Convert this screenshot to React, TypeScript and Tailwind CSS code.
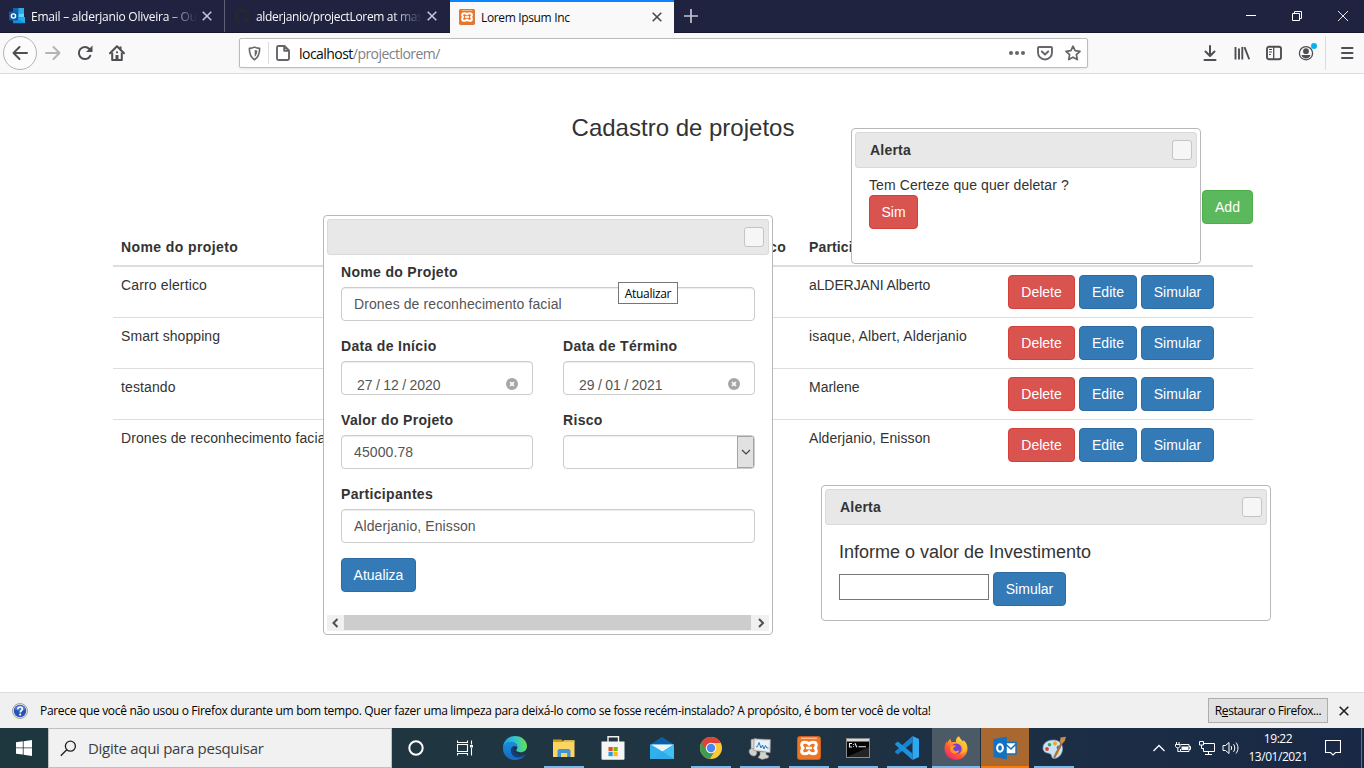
import React from "react";
import { FaGithub } from "react-icons/fa";

const UI = "font-['Open_Sans','Noto_Sans',sans-serif]";

/* ---------- small shared pieces ---------- */

function Xampp({ className }: { className: string }) {
  return (
    <svg className={className} viewBox="0 0 24 24">
      <rect x="0.5" y="0.5" width="23" height="23" rx="2.2" fill="#ee7524" stroke="#c85f22" />
      <rect x="4" y="1.6" width="16" height="1.4" fill="#f9b98a" />
      <path
        d="M8 6.200c-2.300 0-3.300 1.200-3.300 2.800 0 1.200.5 2 1.300 3-.8 1-1.300 1.800-1.300 3 0 1.600 1 2.800 3.300 2.800 1.700 0 3-.6 4-1.700 1 1.100 2.300 1.700 4 1.700 2.300 0 3.300-1.200 3.300-2.800 0-1.200-.5-2-1.300-3 .8-1 1.300-1.800 1.300-3 0-1.600-1-2.800-3.300-2.800-1.700 0-3 .6-4 1.700-1-1.100-2.300-1.700-4-1.700z"
        fill="none" stroke="#fff" strokeWidth="3"
      />
      <path d="M9 12h6" stroke="#fff" strokeWidth="2.600" />
    </svg>
  );
}

function Cross({ className }: { className: string }) {
  return (
    <svg className={className} viewBox="0 0 10 10">
      <path d="M0.700 0.700 9.300 9.300M9.300 0.700 0.700 9.300" fill="none" stroke="currentColor" strokeWidth="1.600" />
    </svg>
  );
}

type Tone = "danger" | "primary" | "success";
const tones: Record<Tone, string> = {
  danger: "bg-[#d9534f] border-[#d43f3a]",
  primary: "bg-[#337ab7] border-[#2e6da4]",
  success: "bg-[#5cb85c] border-[#4cae4c]",
};

function Btn({ tone, width, children }: { tone: Tone; width: string; children: React.ReactNode }) {
  return (
    <button className={`h-[34px] shrink-0 rounded border text-center text-sm leading-5 whitespace-nowrap text-white ${width} ${tones[tone]}`}>
      {children}
    </button>
  );
}

/* ---------- browser chrome ---------- */

function TabBar() {
  return (
    <div className={`flex h-[33px] shrink-0 border-b border-[#15172c] bg-[#202340] text-[12px] ${UI}`}>
      <div className="flex w-[225px] items-center border-r border-[#5d5f75] pr-[12px] pl-[9px] text-[#f9f9fa]">
        <svg className="h-4 w-4 shrink-0" viewBox="0 0 16 16">
          <rect x="4" y="0" width="11" height="11" fill="#1066b5" />
          <rect x="9.500" y="0" width="5.500" height="5.500" fill="#32a9e7" />
          <rect x="9.500" y="5.500" width="5.500" height="4" fill="#50d9ff" />
          <path d="M4 9h12v6.200H4z" fill="#1490df" />
          <path d="M16 9v6.200L7 10z" fill="#28a8ea" />
          <rect x="0" y="3.500" width="9" height="9" rx="0.800" fill="#0f5ba8" />
          <circle cx="4.500" cy="8" r="2.100" fill="none" stroke="#fff" strokeWidth="1.400" />
        </svg>
        <span className="ml-[6px] w-[166px] mask-r-from-82% pt-[2px] whitespace-nowrap tracking-[-0.24px]">Email – alderjanio Oliveira – Ou</span>
        <Cross className="ml-[5px] h-[10px] w-[10px] shrink-0 text-[#c4c5cf]" />
      </div>
      <div className="flex w-[225px] items-center pr-[12px] pl-[9px] text-[#f9f9fa]">
        <FaGithub className="h-4 w-4 shrink-0 text-[#24292e]" />
        <span className="ml-[6px] w-[166px] mask-r-from-82% pt-[2px] whitespace-nowrap tracking-[-0.34px]">alderjanio/projectLorem at mas</span>
        <Cross className="ml-[5px] h-[10px] w-[10px] shrink-0 text-[#c4c5cf]" />
      </div>
      <div className="-mb-px flex h-[33px] w-[224px] items-center border-t-2 border-[#0a84ff] bg-[#f9f9fa] pr-[12px] pb-[1px] pl-[9px] text-[#0c0c0d]">
        <Xampp className="h-4 w-4 shrink-0" />
        <span className="ml-[6px] flex-1 pt-[2px] whitespace-nowrap tracking-[-0.35px]">Lorem Ipsum Inc</span>
        <Cross className="h-[10px] w-[10px] shrink-0 text-[#4a4a4f]" />
      </div>
      <div className="flex flex-1 items-center pl-[10px]">
        <svg className="h-[14px] w-[14px]" viewBox="0 0 14 14">
          <path d="M7 0v14M0 7h14" stroke="#c4c5cf" strokeWidth="1.700" />
        </svg>
        <div className="ml-auto flex items-center gap-[36px] pr-[16px]">
          <svg className="h-[10px] w-[10px]" viewBox="0 0 10 10"><path d="M0 4.500h10" stroke="#fff" /></svg>
          <svg className="h-[10px] w-[10px]" viewBox="0 0 10 10">
            <path d="M0.500 2.500h7v7h-7zM2.500 2.500v-2h7v7h-2" fill="none" stroke="#fff" />
          </svg>
          <svg className="h-[10px] w-[10px]" viewBox="0 0 10 10"><path d="M0 0l10 10M10 0L0 10" stroke="#fff" strokeWidth="0.900" /></svg>
        </div>
      </div>
    </div>
  );
}

function Toolbar() {
  return (
    <div className="flex h-[41px] shrink-0 items-center border-b border-[#dcdcdd] bg-[#f9f9fa] text-[#4f4f53]">
      <div className="ml-[3px] flex h-[34px] w-[34px] items-center justify-center rounded-full border border-[#b3b3b5] bg-[#fcfcfd]">
        <svg className="h-4 w-4" viewBox="0 0 16 16" fill="none" stroke="currentColor" strokeWidth="2" strokeLinecap="round" strokeLinejoin="round">
          <path d="M15 8H1.500M7.500 2 1.500 8l6 6" />
        </svg>
      </div>
      <svg className="ml-[8px] h-4 w-4" viewBox="0 0 16 16" fill="none" stroke="#b4b4b6" strokeWidth="2" strokeLinecap="round" strokeLinejoin="round">
        <path d="M1 8h13.500M8.500 2l6 6-6 6" />
      </svg>
      <svg className="ml-[16px] h-4 w-4" viewBox="0 0 16 16" fill="none" stroke="currentColor" strokeWidth="2">
        <path d="M13.300 10.700A6 6 0 1 1 12.300 4" strokeLinecap="round" />
        <path d="M15.500.5v6.500H9z" fill="currentColor" stroke="none" />
      </svg>
      <svg className="ml-[16px] h-4 w-4" viewBox="0 0 16 16" fill="none" stroke="currentColor" strokeWidth="2" strokeLinejoin="round">
        <path d="M1 8.200 8 1.300l7 6.900" strokeLinecap="round" />
        <path d="M3.200 7.500V15h9.600V7.500M11.500 1.500v3" />
        <path d="M6.500 14v-4h3v4z" fill="currentColor" stroke="none" />
        <circle cx="8" cy="7.300" r="1.100" fill="currentColor" stroke="none" />
      </svg>
      <div className="ml-[114px] flex h-[30px] w-[849px] items-center rounded-[2px] border border-[#bcbcbe] bg-white pr-[6px] pl-[7px] shadow-[0_1px_3px_rgba(0,0,0,0.08)]">
        <svg className="h-[15px] w-[15px]" viewBox="0 0 16 16" fill="none" stroke="#65656a" strokeWidth="1.700">
          <path d="M8 1.200c2 .9 3.800 1.200 5.500 1.300 0 6-1 9.500-5.500 12.200C3.500 12 2.500 8.500 2.500 2.500 4.200 2.400 6 2.100 8 1.200z" strokeLinejoin="round" />
          <path d="M8.200 4.200v7.300c2.100-1.700 2.700-3.500 2.800-6.600z" fill="#65656a" stroke="none" />
        </svg>
        <div className="ml-[6px] h-[22px] w-px bg-[#dcdcde]" />
        <svg className="ml-[6px] h-4 w-4" viewBox="0 0 16 16" fill="none" stroke="#65656a" strokeWidth="1.900" strokeLinejoin="round">
          <path d="M3.500 1h6L14 5.500v8a1.500 1.500 0 0 1-1.500 1.500h-9A1.500 1.500 0 0 1 2 13.500v-11A1.500 1.500 0 0 1 3.500 1zM9.200 1v4.800H14" />
        </svg>
        <span className={`ml-[8px] pt-[1px] text-[14px] tracking-[-0.54px] text-[#0c0c0d] ${UI}`}>
          localhost<span className="text-[#808084]">/projectlorem/</span>
        </span>
        <svg className="ml-auto h-4 w-4" viewBox="0 0 16 16" fill="#65656a">
          <circle cx="2" cy="8" r="2" /><circle cx="8" cy="8" r="2" /><circle cx="14" cy="8" r="2" />
        </svg>
        <svg className="ml-[12px] h-4 w-4" viewBox="0 0 16 16" fill="none" stroke="#65656a" strokeWidth="1.900" strokeLinecap="round" strokeLinejoin="round">
          <path d="M2 2h12a1 1 0 0 1 1 1v4.500a7 7 0 0 1-14 0V3a1 1 0 0 1 1-1zM4.800 6.500 8 9.500l3.200-3" />
        </svg>
        <svg className="ml-[12px] h-4 w-4" viewBox="0 0 16 16" fill="none" stroke="#65656a" strokeWidth="1.700" strokeLinejoin="round">
          <path d="M8 1.200l2.100 4.500 4.900.6-3.600 3.400.9 4.900L8 12.200l-4.300 2.400.9-4.900L1 6.300l4.900-.6z" />
        </svg>
      </div>
      <div className="ml-auto flex items-center">
        <svg className="h-4 w-4" viewBox="0 0 16 16" fill="none" stroke="currentColor" strokeWidth="2" strokeLinecap="round" strokeLinejoin="round">
          <path d="M8 1v9.500M3.500 6.500 8 11l4.500-4.500M2.500 15h11" />
        </svg>
        <svg className="ml-[16px] h-4 w-4" viewBox="0 0 16 16" fill="none" stroke="currentColor" strokeWidth="1.900">
          <path d="M1.500 2v12.500M5 3.500v11M8.300 2v12.500M10.500 2.200l4.700 12" />
        </svg>
        <svg className="ml-[16px] h-4 w-4" viewBox="0 0 16 16" fill="none" stroke="currentColor" strokeWidth="1.900">
          <rect x="1" y="1.800" width="14" height="12.400" rx="2" />
          <path d="M7.700 2v12" strokeWidth="1.300" /><path d="M3 4.500h3M3 7h3M3 9.500h2" strokeWidth="1.100" />
        </svg>
        <div className="relative ml-[16px] h-4 w-4">
          <svg className="h-4 w-4" viewBox="0 0 16 16" fill="none" stroke="currentColor">
            <circle cx="8" cy="8.200" r="6.600" strokeWidth="1.300" />
            <circle cx="8" cy="6.200" r="2.900" fill="currentColor" stroke="none" />
            <path d="M3.500 10h9c-.5 2.300-2.300 3.500-4.500 3.500S4 12.300 3.500 10z" fill="currentColor" stroke="none" />
          </svg>
          <div className="absolute top-[-2px] left-[13px] h-[6px] w-[6px] rounded-full bg-[#00b3f4]" />
        </div>
        <div className="ml-[11px] h-[34px] w-px bg-[#dcdcde]" />
        <svg className="mr-[9px] ml-[13px] h-4 w-4" viewBox="0 0 16 16" stroke="currentColor" strokeWidth="2" strokeLinecap="round">
          <path d="M3 3h10.500M3 8h10.500M3 13h10.500" />
        </svg>
      </div>
    </div>
  );
}

/* ---------- page content ---------- */

const projects = [
  { name: "Carro elertico", people: "aLDERJANI Alberto", nameCls: "tracking-[0.14px]", peopleCls: "tracking-[-0.1px]" },
  { name: "Smart shopping", people: "isaque, Albert, Alderjanio", nameCls: "tracking-[0.07px]", peopleCls: "tracking-[0.15px]" },
  { name: "testando", people: "Marlene", nameCls: "tracking-[0.12px]", peopleCls: "" },
  { name: "Drones de reconhecimento facial", people: "Alderjanio, Enisson", nameCls: "tracking-[0.1px]", peopleCls: "tracking-[0.08px]" },
];

function ProjectTable() {
  return (
    <div className="w-[1140px]">
      <div className="flex h-[38px] border-b-2 border-[#ddd] pt-2 font-bold tracking-[0.4px]">
        <div className="w-[625px] pl-2">Nome do projeto</div>
        <div className="w-[63px] pl-2">Risco</div>
        <div className="w-[199px] pl-2 tracking-[0.15px]">Participantes</div>
        <div className="flex-1" />
      </div>
      {projects.map((p, i) => (
        <div key={p.name} className={i === 0 ? "flex h-[50px] pt-2" : "flex h-[51px] border-t border-[#ddd] pt-2"}>
          <div className={`w-[688px] pl-2 ${p.nameCls}`}>{p.name}</div>
          <div className={`w-[199px] pl-2 ${p.peopleCls}`}>{p.people}</div>
          <div className="flex flex-1 gap-1 pl-2">
            <Btn tone="danger" width="w-[67px]">Delete</Btn>
            <Btn tone="primary" width="w-[58px]">Edite</Btn>
            <Btn tone="primary" width="w-[73px]">Simular</Btn>
          </div>
        </div>
      ))}
    </div>
  );
}

function Dialog({ title, className, children }: { title: string; className: string; children: React.ReactNode }) {
  return (
    <div className={`absolute flex flex-col rounded-[4px] border border-[#b8b8b8] bg-white p-[3px] ${className}`}>
      <div className="flex h-9 shrink-0 items-center justify-between rounded-[3px] border border-[#dadada] bg-[#e8e8e8] pr-1 pl-[14px] font-bold tracking-[0.2px] text-[#333]">
        <span>{title}</span>
        <div className="h-5 w-5 rounded-[3px] border border-[#c5c5c5] bg-[#f6f6f6]" />
      </div>
      {children}
    </div>
  );
}

function Field({ label, children }: { label: string; children: React.ReactNode }) {
  return (
    <div className="mb-[15px] flex-1">
      <div className="mb-[5px] h-5 font-bold tracking-[0.32px]">{label}</div>
      <div className="flex h-[34px] items-center overflow-hidden rounded border border-[#ccc] bg-white tracking-[0.1px] text-[#555] shadow-[inset_0_1px_1px_rgba(0,0,0,0.075)]">
        {children}
      </div>
    </div>
  );
}

function DateValue({ d, m, y }: { d: string; m: string; y: string }) {
  return (
    <div className="flex w-full items-center justify-between pt-[13px] pr-[14px] pl-[15px]">
      <span className="tracking-normal">{d}<span className="mx-[3.400px]">/</span>{m}<span className="mx-[3.400px]">/</span>{y}</span>
      <svg className="mb-[1px] h-3 w-3" viewBox="0 0 12 12">
        <circle cx="6" cy="6" r="6" fill="#a6a6a6" />
        <path d="M4 4l4 4M8 4l-4 4" stroke="#fff" strokeWidth="1.700" />
      </svg>
    </div>
  );
}

function EditDialog() {
  return (
    <Dialog title="" className="top-[141px] left-[323px] h-[420px] w-[450px]">
      <div className="flex-1 px-[14px] pt-[7px]">
        <Field label="Nome do Projeto"><span className="pl-3">Drones de reconhecimento facial</span></Field>
        <div className="flex gap-[30px]">
          <Field label="Data de Início"><DateValue d="27" m="12" y="2020" /></Field>
          <Field label="Data de Término"><DateValue d="29" m="01" y="2021" /></Field>
        </div>
        <div className="flex gap-[30px]">
          <Field label="Valor do Projeto"><span className="pl-3">45000.78</span></Field>
          <Field label="Risco">
            <div className="ml-auto flex h-full w-[17px] items-center justify-center border border-[#a4a4a4] bg-[#e1e1e1]">
              <svg className="h-2 w-[10px]" viewBox="0 0 10 8"><path d="M1 2l4 4 4-4" fill="none" stroke="#444" strokeWidth="1.200" /></svg>
            </div>
          </Field>
        </div>
        <Field label="Participantes"><span className="pl-3">Alderjanio, Enisson</span></Field>
        <Btn tone="primary" width="w-[75px]">Atualiza</Btn>
      </div>
      <div className="flex h-4 shrink-0 items-center bg-[#f0f0f0] text-[#505050]">
        <svg className="h-4 w-[17px]" viewBox="0 0 17 16"><path d="M10.500 4 6.500 8l4 4" fill="none" stroke="currentColor" strokeWidth="2" /></svg>
        <div className="h-[15px] flex-1 self-start bg-[#cdcdcd]" />
        <svg className="h-4 w-[18px]" viewBox="0 0 18 16"><path d="M8 4l4 4-4 4" fill="none" stroke="currentColor" strokeWidth="2" /></svg>
      </div>
    </Dialog>
  );
}

function Page() {
  return (
    <main className="relative flex flex-1 flex-col items-center overflow-hidden bg-white pl-[2px] font-['Liberation_Sans',Arial,sans-serif] text-sm leading-5 text-[#333]">
      <h1 className="mt-[41px] text-[24px] leading-[26px]">Cadastro de projetos</h1>
      <div className="mt-[49px] mb-[5px] flex w-[1140px] justify-end">
        <Btn tone="success" width="w-[51px]">Add</Btn>
      </div>
      <ProjectTable />

      <Dialog title="Alerta" className="top-[54px] left-[851px] h-[136px] w-[350px]">
        <div className="px-[14px] pt-[7px]">
          <div className="tracking-[0.1px]">Tem Certeze que quer deletar ?</div>
          <Btn tone="danger" width="w-[49px]">Sim</Btn>
        </div>
      </Dialog>

      <EditDialog />
      <div className={`absolute top-[208px] left-[618px] flex h-[22px] w-[60px] items-center justify-center border border-[#767676] bg-white pt-[2px] text-[12px] tracking-[-0.3px] text-black ${UI}`}>
        Atualizar
      </div>

      <Dialog title="Alerta" className="top-[411px] left-[821px] h-[136px] w-[450px]">
        <div className="px-[14px] pt-[17px]">
          <h4 className="text-[18px] leading-5">Informe o valor de Investimento</h4>
          <div className="mt-[10px] flex gap-1">
            <div className="mt-[2px] h-[26px] w-[150px] border border-[#767676] bg-white" />
            <Btn tone="primary" width="w-[73px]">Simular</Btn>
          </div>
        </div>
      </Dialog>
    </main>
  );
}

function NotificationBar() {
  return (
    <div className={`flex h-9 shrink-0 items-center border-t border-[#dcdcdc] bg-[#f0f0f0] text-[12px] text-black ${UI}`}>
      <svg className="ml-3 h-4 w-4" viewBox="0 0 16 16">
        <circle cx="8" cy="8" r="7.500" fill="#e8e8e8" stroke="#9a9a9a" strokeWidth="0.900" />
        <circle cx="8" cy="8" r="6.200" fill="#2453b8" />
        <path d="M2.500 6.500a5.700 5.700 0 0 1 11 0c-3 1.500-8 1.500-11 0z" fill="#4a7bd4" />
        <path d="M5.800 6.300C5.800 4.800 6.700 4 8.100 4s2.300.8 2.300 2c0 1.600-2.200 1.700-2.200 3.500" fill="none" stroke="#fff" strokeWidth="1.700" />
        <circle cx="8.200" cy="11.600" r="1.100" fill="#fff" />
      </svg>
      <span className="ml-3 whitespace-nowrap tracking-[-0.32px]">
        Parece que você não usou o Firefox durante um bom tempo. Quer fazer uma limpeza para deixá-lo como se fosse recém-instalado? A propósito, é bom ter você de volta!
      </span>
      <div className="ml-auto flex h-[25px] w-[120px] items-center justify-center border border-[#adadad] bg-[#e1e1e1] whitespace-nowrap tracking-[-0.44px]">
        <span>R<span className="underline">e</span>staurar o Firefox...</span>
      </div>
      <Cross className="mr-[15px] ml-[11px] h-[10px] w-[10px] text-[#222]" />
    </div>
  );
}

/* ---------- taskbar ---------- */

const icon = "h-6 w-6";

const Edge = () => (
  <svg className={icon} viewBox="0 0 24 24">
    <defs>
      <linearGradient id="edgeTop" x1="0" y1="0.500" x2="1" y2="0.400">
        <stop offset="0" stopColor="#1f9ee0" /><stop offset="0.500" stopColor="#2cc4d4" /><stop offset="1" stopColor="#6be04c" />
      </linearGradient>
      <linearGradient id="edgeLow" x1="0" y1="0" x2="0" y2="1">
        <stop offset="0" stopColor="#1b8fdb" /><stop offset="1" stopColor="#1668c0" />
      </linearGradient>
    </defs>
    <path d="M0 11.500C.3 5 5.300 0 12 0c7.200 0 12 5 12 10.300 0 3.700-2.800 6-6.200 6-3 0-4.600-1.100-4.600-2 0-.8 1.200-1.200 1.200-3.100C14.400 8.500 11.800 6 8 6c-4 0-6.500 2.300-8 5.500z" fill="url(#edgeTop)" />
    <path d="M0 12.200C.4 8 4.300 5.700 8 5.700c3.700 0 6.300 2.300 6.400 5.200C10 9 7.600 12 8 15.200c.4 4 4 6.500 8 6 3-.3 5.200-1.800 6.400-3.300C21 21.200 17 24 12 24 5 24-.3 18.500 0 12.200z" fill="url(#edgeLow)" />
    <path d="M8 15c-.4-3 1.500-5 4-5-.7.600-1.300 1.800-1.300 3.200 0 3 2.800 5.800 6.600 5.800 2.200 0 3.800-.5 5.100-1.100-1.500 2-3.500 3-6.400 3.300-4.200.3-7.600-2.200-8-6.200z" fill="#123f83" />
  </svg>
);

const Explorer = () => (
  <svg className={icon} viewBox="0 0 24 24">
    <path d="M1 3.500h8.500l2 2.500H1z" fill="#d9970f" />
    <path d="M1 6h10l1-1.800h10.500V21H1z" fill="#fcd462" />
    <path d="M1 6h9l1.500-1.200H22.500V6z" fill="#f4b731" />
    <path d="M5.500 21v-6.500L7 13h10l1.500 1.500V21h-3.300v-4H9v4z" fill="#3f94d6" />
  </svg>
);

const Store = () => (
  <svg className={icon} viewBox="0 0 24 24">
    <path d="M7 6V.8h10.500V6" fill="none" stroke="#f2f2f2" strokeWidth="1.400" />
    <path d="M.5 5.500h23v17.300a1 1 0 0 1-1 1h-21a1 1 0 0 1-1-1z" fill="#f5f5f5" />
    <path d="M7.500 11h4.200v4.200H7.500z" fill="#e84c22" /><path d="M12.500 11h4.200v4.200h-4.200z" fill="#7db80a" />
    <path d="M7.500 16h4.200v4.200H7.500z" fill="#1ba1e8" /><path d="M12.500 16h4.200v4.200h-4.200z" fill="#fcb813" />
  </svg>
);

const Mail = () => (
  <svg className={icon} viewBox="0 0 24 24">
    <path d="M0 8.500 12 1l12 7.500V12H0z" fill="#0f5ea8" />
    <path d="M0 8.500h24V23H0z" fill="#31b0ee" />
    <path d="M1 8.500h22.500L12.500 15.500z" fill="#edf5fb" />
    <path d="M0 23 24 8.500V23z" fill="#43bff4" />
    <path d="M12.500 15.500 24 23H0z" fill="#1f9be2" opacity="0.550" />
  </svg>
);

const Chrome = () => (
  <svg className={icon} viewBox="0 0 24 24">
    <circle cx="12" cy="12" r="11" fill="#fbc934" />
    <path d="M12 12 2.500 6.500A11 11 0 0 0 10.800 22.900L16.500 14z" fill="#3d9b53" />
    <path d="M2.500 6.500A11 11 0 0 1 21.800 7H12l-4.300 7.500z" fill="#dc4437" />
    <circle cx="12" cy="12" r="5.300" fill="#f4f4f4" />
    <circle cx="12" cy="12" r="4.200" fill="#4a87ee" />
  </svg>
);

const Monitor = () => (
  <svg className={icon} viewBox="0 0 24 24">
    <path d="M3 3.500 8 2.500v16l-5-1z" fill="#d8d8d4" stroke="#77797a" strokeWidth="0.600" />
    <path d="M1 15c0-1.500 1.500-2.500 4-2.500s3.800 1.500 3.800 4S7.500 20.500 5 20 1 17.500 1 15z" fill="#d0d0cc" stroke="#808283" strokeWidth="0.600" />
    <path d="M6 2.800 22.500 3.500l-.3 13.300L5.500 14.500z" fill="#dededa" stroke="#8b8d8e" strokeWidth="0.600" />
    <path d="M7.500 4.300 21 5l-.2 10L7 13.200z" fill="#e8f2fa" />
    <path d="M8 11l1.500-.5L11 6.500l2 5.500 1.500-3 1.500 4 1.500-3.500 1.500 2.500h1.500" fill="none" stroke="#2878b8" />
    <path d="M12 16h6v2.500l3 1.500-1 2-6 1.500-4-2 2-2.500z" fill="#d2d2cd" stroke="#8b8d8e" strokeWidth="0.500" />
  </svg>
);

const Cmd = () => (
  <svg className={icon} viewBox="0 0 24 24">
    <rect x="0.500" y="2.500" width="23" height="19" fill="#050505" stroke="#8a8a8a" />
    <rect x="1" y="3" width="22" height="2.500" fill="#d8d8d8" />
    <path d="M6 7.500H3.500v3.500H6M7.500 8v.8M7.500 10v.8M9 7.300l1.800 4M12.500 10.800H20" fill="none" stroke="#eee" strokeWidth="1.100" />
    <path d="M1 21 23 11v10z" fill="#252525" />
  </svg>
);

const Code = () => (
  <svg className={icon} viewBox="0 0 24 24">
    <path d="M17.500 0 24 3v18l-6.500 3z" fill="#2ea8f0" />
    <path d="M17.500 0v6.500L2.800 18.500.3 16.500c-.4-.4-.4-.9 0-1.300z" fill="#1583cf" />
    <path d="M17.500 24v-6.500L2.800 5.500.3 7.500c-.4.400-.4.900 0 1.300z" fill="#1d92dc" />
  </svg>
);

const Firefox = () => (
  <svg className={icon} viewBox="0 0 24 24">
    <defs>
      <linearGradient id="ffx" x1="0.900" y1="0" x2="0.200" y2="1">
        <stop offset="0" stopColor="#fff04a" /><stop offset="0.350" stopColor="#ffb32c" /><stop offset="0.650" stopColor="#ff5a36" /><stop offset="1" stopColor="#ef2277" />
      </linearGradient>
    </defs>
    <path d="M15 .3c.8 2.400 2.500 3.500 4 5.200.6-.3.500-1 .4-1.500C22 6 23.500 9 23.500 12.300 23.500 19 18.300 23.800 12 23.800S.5 19 .5 12.800c0-3.300 1.200-6 2.600-7.500 0 1 .2 1.500.5 1.900.5-2.200 1.500-3.600 2.900-4.400-.1 1.400.4 2.600 1.400 3.400 1.300-.4 2.800-.3 4 .2C11.500 4 12.500 1.500 15 .3z" fill="url(#ffx)" />
    <circle cx="12.300" cy="12.700" r="5.300" fill="#7440d8" />
    <path d="M7 9.500c2-.5 3-.2 5.200.3-.5 1.200-2 1.200-2.700 2.200-.5 1.200.2 3 2.500 3.200 1.200 0 2-.8 3.200-.6-.7 2.500-3 3.700-5 3.100C6.500 16.800 5.300 13 7 9.500z" fill="#ff9828" />
    <path d="M13.500 6c3 .5 5.300 3 5.500 6 .2 3-1 5-3.500 6.300 5-1 6.800-5 5.700-9.300L18 5z" fill="#ffbd34" />
  </svg>
);

const Outlook = () => (
  <svg className={icon} viewBox="0 0 24 24">
    <path d="M12 6.500h11v11.500H12z" fill="#fff" stroke="#1271c0" strokeWidth="1.400" />
    <path d="M12.500 8l5.500 5 5-5" fill="none" stroke="#1271c0" strokeWidth="1.600" />
    <path d="M.5 3 13.800.8v22.500L.5 21z" fill="#1271c0" />
    <ellipse cx="7" cy="12" rx="2.900" ry="3.700" fill="none" stroke="#fff" strokeWidth="2" />
  </svg>
);

const Paint = () => (
  <svg className={icon} viewBox="0 0 24 24">
    <path d="M1 12C1 6.800 6 4 11.500 4S21 8 20.500 13.500 16 22.500 12 22.500c-3 0-1.500-3-3.500-4.500S1 17.500 1 12z" fill="#c9e3f4" stroke="#7da4be" strokeWidth="0.700" />
    <circle cx="5" cy="13" r="1.900" fill="#df3c34" /><circle cx="7.500" cy="8.800" r="1.800" fill="#42a044" />
    <circle cx="13" cy="7.500" r="2" fill="#f4a327" /><circle cx="16.500" cy="11.500" r="1.900" fill="#2e7fd4" /><circle cx="15" cy="17" r="1.900" fill="#f3d22f" />
    <path d="M20.500 5.500 12.500 21" stroke="#b06c34" strokeWidth="2.200" strokeLinecap="round" />
    <path d="M18.500 1.500 24 .8l-1.500 4.700-2.600 2-2-1.500z" fill="#c98e4e" />
  </svg>
);

const apps = [
  { id: "edge", el: <Edge />, state: "idle" },
  { id: "explorer", el: <Explorer />, state: "open" },
  { id: "store", el: <Store />, state: "idle" },
  { id: "mail", el: <Mail />, state: "idle" },
  { id: "chrome", el: <Chrome />, state: "open" },
  { id: "monitor", el: <Monitor />, state: "open" },
  { id: "xampp", el: <Xampp className={icon} />, state: "open" },
  { id: "cmd", el: <Cmd />, state: "open" },
  { id: "code", el: <Code />, state: "open" },
  { id: "firefox", el: <Firefox />, state: "active" },
  { id: "outlook", el: <Outlook />, state: "alert" },
  { id: "paint", el: <Paint />, state: "open" },
];

const cellTone: Record<string, string> = { idle: "", open: "", active: "bg-[#4c5a66]", alert: "bg-[#a9682f]" };
const barTone: Record<string, string> = {
  idle: "w-10",
  open: "w-10 bg-[#76b9ed]",
  active: "w-12 bg-[#76b9ed]",
  alert: "w-12 bg-[#ff7b00]",
};

function Taskbar() {
  return (
    <div className={`flex h-10 shrink-0 bg-linear-to-r from-[#1e363e] via-[#203542] to-[#192845] text-white ${UI}`}>
      <div className="flex w-12 items-center justify-center">
        <svg className="h-4 w-4" viewBox="0 0 16 16" fill="#fff">
          <path d="M0 2.300 6.800 1.300v6.200H0zM7.600 1.200 16 0v7.500H7.600zM0 8.300h6.800v6.300L0 13.700zM7.600 8.300H16V16l-8.400-1.200z" />
        </svg>
      </div>
      <div className="flex w-[344px] items-center border border-[#c0c0c0] bg-[#f1f1f1] pl-[11px]">
        <svg className="h-[17px] w-[17px]" viewBox="0 0 18 18" fill="none" stroke="#222" strokeWidth="1.400">
          <circle cx="11" cy="6.500" r="5.300" /><path d="M7.200 10.300.8 16.700" />
        </svg>
        <span className="ml-[11px] text-[15px] tracking-[-0.29px] text-[#3d3d3d]">Digite aqui para pesquisar</span>
      </div>
      <div className="flex w-12 items-center justify-center">
        <svg className="h-4 w-4" viewBox="0 0 16 16"><circle cx="8" cy="8" r="6.700" fill="none" stroke="#fff" strokeWidth="2" /></svg>
      </div>
      <div className="flex w-[49px] items-center justify-center">
        <svg className="h-4 w-4" viewBox="0 0 16 16" fill="none" stroke="#fff" strokeWidth="1.100">
          <path d="M.5 4.500h10v7H.5zM.5 .5v2h10v-2M.5 15.500v-2h10v2M14.500 .5v4M14.500 8v7.500" /><path d="M13 5h3v2.500h-3z" fill="#fff" stroke="none" />
        </svg>
      </div>
      <div className="ml-[2px] flex gap-px">
        {apps.map((a) => (
          <div key={a.id} className={`flex w-12 flex-col items-center ${cellTone[a.state]}`}>
            <div className="flex h-[38px] items-center pt-[2px]">{a.el}</div>
            <div className={`h-[2px] ${barTone[a.state]}`} />
          </div>
        ))}
      </div>
      <div className="ml-auto flex items-center">
        <svg className="h-3 w-3" viewBox="0 0 12 12"><path d="M.5 9 6 3.500 11.500 9" fill="none" stroke="#fff" strokeWidth="1.300" /></svg>
        <svg className="ml-[10px] h-4 w-4" viewBox="0 0 16 16" fill="none" stroke="#fff">
          <path d="M5.500 4.500h8.500v7H5.500V9M14 6.500h1.500v3H14" /><path d="M6.500 6.500h6.500v3.500H6.500z" fill="#fff" stroke="none" />
          <path d="M1.500 2v2M4 2v2M.5 4.500h4.500v1.500c0 1-.8 1.800-2.200 1.800S.5 7 .5 6zM2.800 8v3.500h2" />
        </svg>
        <svg className="ml-[8px] h-4 w-4" viewBox="0 0 16 16" fill="none" stroke="#fff">
          <path d="M5 3.500h10.500v8H4.500V8M9.500 11.500v3M6 14.500h7M.5 1.500h4v3.500h-4zM2.500 5v3.500h2" />
        </svg>
        <svg className="ml-[7px] h-4 w-[18px]" viewBox="0 0 18 16" fill="none" stroke="#fff">
          <path d="M1 5.500h2.500L7 2.500v11l-3.500-3H1z" /><path d="M9 6c.8 1.200.8 2.800 0 4M11.500 4.200c1.700 2.200 1.700 5.400 0 7.600M14 2.500c2.600 3.200 2.600 7.800 0 11" />
        </svg>
        <div className="ml-[6px] w-[64px] text-center text-[12px] leading-[18px] tracking-[-0.45px]">
          <div>19:22</div>
          <div>13/01/2021</div>
        </div>
        <svg className="ml-[15px] h-4 w-4" viewBox="0 0 16 16" fill="none" stroke="#fff" strokeWidth="1.100">
          <path d="M.5 .5h15v12h-5L8 15l-2.500-2.500h-5z" />
        </svg>
        <div className="mr-[2px] ml-[20px] h-10 w-px bg-[#66707f]" />
      </div>
    </div>
  );
}

export default function App() {
  return (
    <div className="flex h-[768px] w-[1364px] flex-col overflow-hidden bg-white">
      <TabBar />
      <Toolbar />
      <Page />
      <NotificationBar />
      <Taskbar />
    </div>
  );
}
